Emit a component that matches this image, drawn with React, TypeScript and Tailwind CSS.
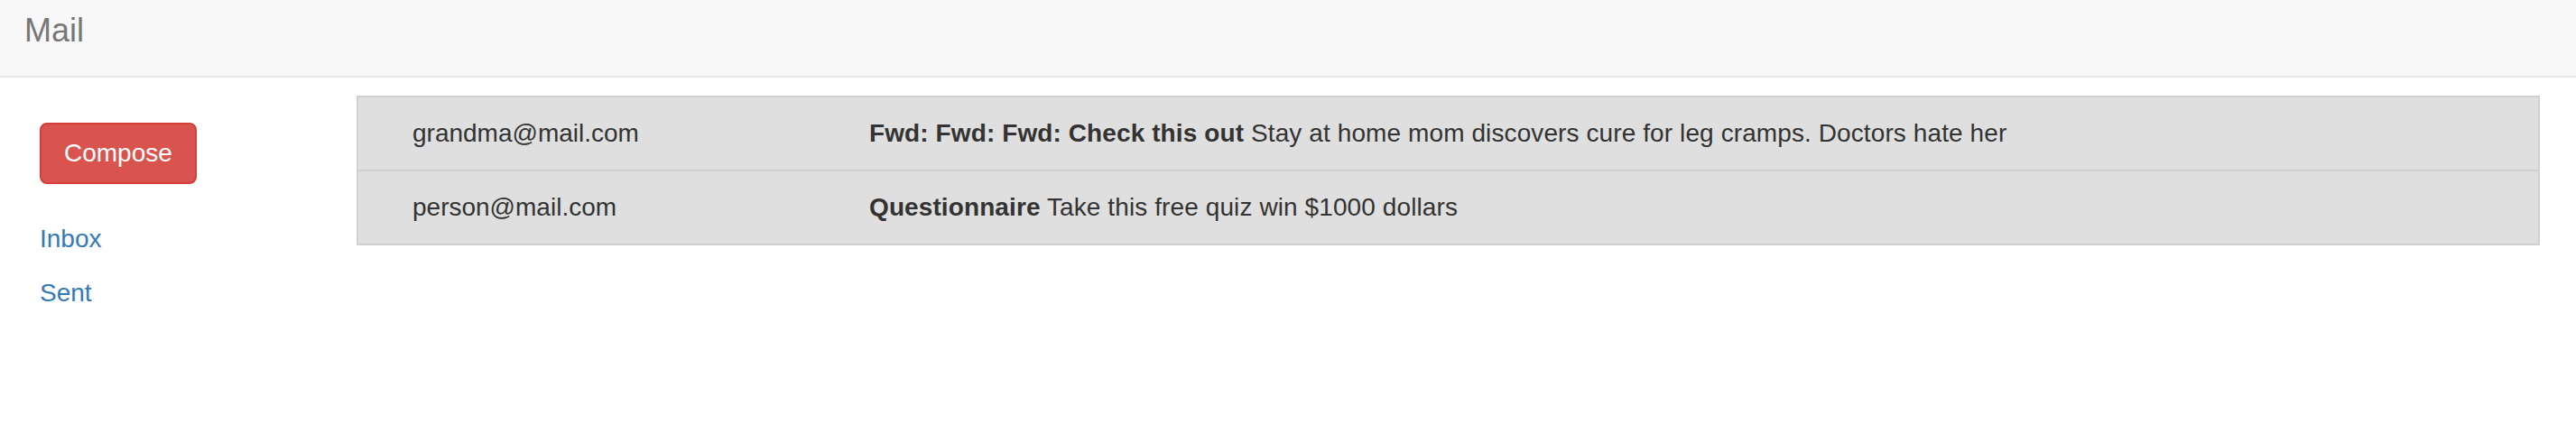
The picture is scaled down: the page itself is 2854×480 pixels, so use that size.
import React from "react";

const emails = [
  {
    from: "grandma@mail.com",
    subject: "Fwd: Fwd: Fwd: Check this out",
    body: "Stay at home mom discovers cure for leg cramps. Doctors hate her",
  },
  {
    from: "person@mail.com",
    subject: "Questionnaire",
    body: "Take this free quiz win $1000 dollars",
  },
];

export default function App() {
  return (
    <div
      className="w-[2854px] h-[480px] bg-white text-[#333333]"
      style={{ fontFamily: '"Liberation Sans", Arial, Helvetica, sans-serif' }}
    >
      <nav className="h-[86px] bg-[#f8f8f8] border-b-2 border-[#e7e7e7]">
        <div className="pl-[27px] pt-[16px] text-[36px] leading-none text-[#777777]">Mail</div>
      </nav>
      <div className="flex">
        <aside className="w-[395px] shrink-0 pl-[44px] pt-[50px]">
          <button className="h-[68px] px-[25px] rounded-[8px] bg-[#d9534f] border-2 border-[#d43f3a] text-white text-[28px] leading-[40px]">
            Compose
          </button>
          <ul className="mt-[31px]">
            <li className="h-[60px] text-[28px] leading-[60px] text-[#337ab7]">Inbox</li>
            <li className="h-[60px] text-[28px] leading-[60px] text-[#337ab7]">Sent</li>
          </ul>
        </aside>
        <main className="flex-1 pt-[20px] pr-[40px]">
          <div className="border-2 border-[#d0d0d0] bg-[#dfdfdf]">
            {emails.map((e, i) => (
              <div
                key={i}
                className={`flex items-center h-[80px] text-[28px] leading-[40px] ${
                  i > 0 ? "border-t-2 border-[#d0d0d0] h-[82px]" : ""
                }`}
              >
                <div className="w-[566px] shrink-0 pl-[60px]">{e.from}</div>
                <div className="tracking-[0.1px]">
                  <span className="font-bold">{e.subject}</span> {e.body}
                </div>
              </div>
            ))}
          </div>
        </main>
      </div>
    </div>
  );
}
